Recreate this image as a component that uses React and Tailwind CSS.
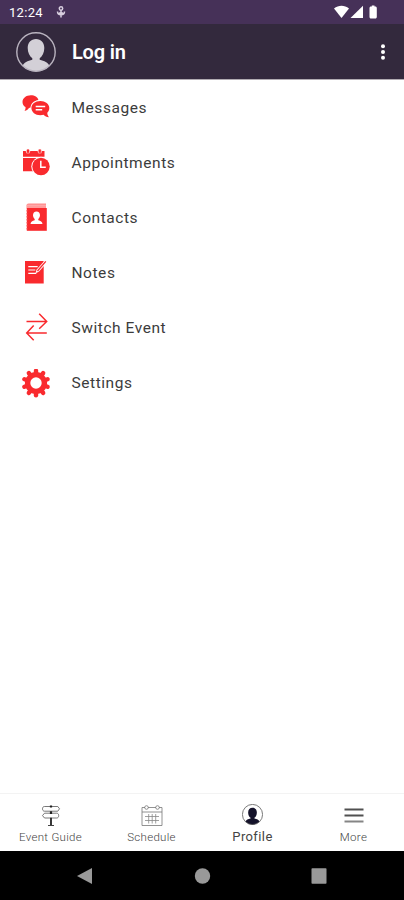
import React from 'react';

const gearAngles = [0, 36, 72, 108, 144, 180, 216, 252, 288, 324];

const MessagesIcon = () => (
  <svg width="29" height="29" viewBox="0 0 29 29" fill="#f92a2e">
    <path d="M8.800 2.300c4 0 7 2 7.600 4.700-4.400.6-7.600 3.600-7.900 7.600-.6.3-1 .4-1.500.4-1.100 1.600-2.500 2.500-4.500 3 .9-1.300 1.200-2.500 1-3.900C1.600 13 .5 11.200.5 9c0-3.800 3.700-6.700 8.300-6.700z" />
    <path d="M18.300 7.900c5 0 9 3 9 7.100 0 2-.8 3.600-2 4.800 0 1.600.5 3 1.600 4.400-2.300-.2-4-1-5.300-2.400-1 .3-2.100.4-3.300.4-5 0-8.900-3.100-8.900-7.200s3.900-7.100 8.900-7.100z" />
    <path d="M13.700 13.500h9.500M13.700 16.800h6.500" stroke="#fff" strokeWidth="1.400" />
  </svg>
);

const AppointmentsIcon = () => (
  <svg width="29" height="29" viewBox="0 0 29 29" fill="#f92a2e">
    <path d="M1 3h21.500v5.800H1zM1 10h21.500v13.200H1z" />
    <circle cx="6" cy="3.400" r="2.200" fill="#ffb3b3" />
    <circle cx="17.800" cy="3.400" r="2.200" fill="#ffb3b3" />
    <path d="M5 1.500h2v3.200H5zM16.800 1.500h2v3.200h-2z" />
    <circle cx="19" cy="18.500" r="9.700" fill="#fff" />
    <circle cx="19" cy="18.500" r="8.700" />
    <path d="M18.800 12.800v6.400h5" fill="none" stroke="#fff" strokeWidth="1.500" />
  </svg>
);

const ContactsIcon = () => (
  <svg width="29" height="29" viewBox="0 0 29 29" fill="#f92a2e">
    <path d="M6.500.5H24v5H4.500V2.500c0-1.200.8-2 2-2z" fill="#ff8b8b" />
    <path d="M5 2.300h19M5 4h19" stroke="#ffc9c9" strokeWidth=".6" />
    <path d="M4.800 5h20v22.800h-20z" />
    <path d="M4.600 7v20" stroke="#ff9b9b" strokeWidth="1.200" strokeDasharray="1.500 1.500" />
    <path d="M14.500 8.500c2.200 0 3.500 1.500 3.500 3.700 0 1.500-.7 2.900-1.700 3.700v1.300c2.300.5 3.900 1.500 4.200 3.800h-12c.3-2.300 1.900-3.300 4.200-3.800v-1.300c-1-.8-1.700-2.200-1.700-3.700 0-2.200 1.300-3.700 3.500-3.700z" fill="#fff" />
  </svg>
);

const NotesIcon = () => (
  <svg width="29" height="29" viewBox="0 0 29 29" fill="#f92a2e">
    <path d="M3 3h18.700v22.500H3z" />
    <path d="M6.300 8.700h9.400M6.300 12h7M6.300 15.300h8" stroke="#fff" strokeWidth="1.200" />
    <path d="M13.500 15.300l1-3.500 8-9 2.300 2-8 9z" fill="#fff" />
    <path d="M15.500 13l8.300-9.700" stroke="#f92a2e" strokeWidth="1.300" />
  </svg>
);

const SwitchIcon = () => (
  <svg width="29" height="29" viewBox="0 0 29 29" fill="none" stroke="#f92a2e" strokeWidth="1.500">
    <path d="M4.500 8.500h20M17.200.8l7.500 7.700-7.500 7.300M24.800 20h-20M11.700 12.600l-7 7.400 7 7.300" />
  </svg>
);

const SettingsIcon = () => (
  <svg width="29" height="29" viewBox="0 0 29 29">
    {gearAngles.map((a) => (
      <path
        key={a}
        d="M14 4.500V1.800"
        stroke="#f92a2e"
        strokeWidth="4.400"
        strokeLinecap="round"
        transform={`rotate(${a} 14 14)`}
      />
    ))}
    <circle cx="14" cy="14" r="8.400" fill="none" stroke="#f92a2e" strokeWidth="5.400" />
  </svg>
);

const GuideIcon = () => (
  <svg width="24" height="24" viewBox="0 0 24 24" fill="none" stroke="#555" strokeWidth=".8">
    <path d="M5.500 3.500h13.300l1.700 2.300-1.700 2.400H5.500c-1.300 0-2-1-2-2.400s.7-2.300 2-2.300z" />
    <path d="M5.500 10.200h12.200c1.300 0 2 1 2 2.400s-.7 2.400-2 2.400H5.500l-2-2.400z" />
    <path d="M12 2.500v2M12 8.200v2.800" stroke="#222" strokeWidth="2.200" />
    <path d="M12 14.700V22" stroke="#222" strokeWidth="1.800" />
    <path d="M9 22.500h6" stroke="#444" strokeWidth="1" />
  </svg>
);

const ScheduleIcon = () => (
  <svg width="24" height="24" viewBox="0 0 24 24" fill="none" stroke="#777" strokeWidth=".8">
    <path d="M5 4.500H2v18h20v-18h-3M8 4.500h8M2 9h20" />
    <circle cx="6.500" cy="4.500" r="1.800" />
    <circle cx="17.500" cy="4.500" r="1.800" />
    <path d="M5 13.500h14M5 17.500h14M8.700 11v9.500M12.200 11v9.500M15.700 11v9.500" stroke="#888" />
  </svg>
);

const Person = ({ size, ring, fill, ringWidth }) => (
  <svg width={size} height={size} viewBox="0 0 40 40">
    <path d="M20 7c5 0 8.300 3.600 8.300 9 0 4.300-1.900 8.300-4.600 10.200v1.500c4.600 1 8.500 2.600 9.800 6.300A19 19 0 0 1 20 39.300 19 19 0 0 1 6.500 34c1.300-3.700 5.200-5.300 9.800-6.300v-1.500c-2.700-1.900-4.600-5.900-4.600-10.200 0-5.400 3.300-9 8.300-9z" fill={fill} />
    <circle cx="20" cy="20" r="19.200" fill="none" stroke={ring} strokeWidth={ringWidth} />
  </svg>
);

const MoreIcon = () => (
  <svg width="24" height="24" viewBox="0 0 24 24" strokeWidth="2">
    <path d="M2.500 6.500h19M2.500 12.500h19" stroke="#505050" />
    <path d="M2.500 18.500h19" stroke="#858585" />
  </svg>
);

const menuItems = [
  { label: 'Messages', icon: MessagesIcon },
  { label: 'Appointments', icon: AppointmentsIcon },
  { label: 'Contacts', icon: ContactsIcon },
  { label: 'Notes', icon: NotesIcon },
  { label: 'Switch Event', icon: SwitchIcon },
  { label: 'Settings', icon: SettingsIcon },
];

function StatusBar() {
  return (
    <div className="flex h-6 items-center bg-[#463158] pl-[9px] pr-[25px] text-white">
      <span className="pt-[2px] text-[13px] tracking-[0.3px]">12:24</span>
      <svg className="ml-3" width="12" height="14" viewBox="0 0 12 14" fill="none" stroke="#d8cfdf" strokeWidth="1.500">
        <circle cx="6" cy="3.500" r="1.700" />
        <path d="M2.500 6.500c0 2 1.500 3.200 3.500 3.200s3.500-1.200 3.500-3.200M6 5v7.500M4.200 7.500L6 9.500l1.800-2" />
      </svg>
      <div className="ml-auto flex items-center">
        <svg width="45" height="16" viewBox="0 0 45 16" fill="#fff">
          <path d="M0 4.500c4.500-3.700 10.500-3.700 15 0L7.500 14z" />
          <path d="M29 1.800V14H16.500z" />
          <path d="M37 2.500h.8V1.500h2.700v1h.8c.9 0 1.500.6 1.500 1.500v9c0 .9-.6 1.500-1.500 1.500H37c-.9 0-1.500-.6-1.500-1.500V4c0-.9.6-1.500 1.500-1.500z" />
        </svg>
      </div>
    </div>
  );
}

function Header() {
  return (
    <header className="flex h-14 items-center border-b border-[#b0abb1] bg-[#33293d] pl-4 pr-[18px] pt-px">
      <Person size={40} ring="#b9b3bf" fill="#d3d0d7" ringWidth={1.4} />
      <h1 className="ml-4 text-[20px] font-semibold tracking-[-0.2px] text-white">Log in</h1>
      <svg className="ml-auto" width="6" height="20" viewBox="0 0 6 20" fill="#fff">
        <circle cx="3" cy="4.200" r="2" />
        <circle cx="3" cy="10" r="2" />
        <circle cx="3" cy="15.800" r="2" />
      </svg>
    </header>
  );
}

function TabItem({ label, icon, active }) {
  return (
    <button className="flex flex-1 flex-col items-center pt-[9px]">
      <span className={active ? 'flex h-6 items-center pb-[2px]' : 'flex h-6 items-center'}>{icon}</span>
      {active ? (
        <span className="mt-px text-[13px] leading-[18px] tracking-[0.4px] text-[#444]">{label}</span>
      ) : (
        <span className="mt-px text-[11.5px] font-light leading-[18px] tracking-[0.3px] text-[#444]">{label}</span>
      )}
    </button>
  );
}

export default function App() {
  return (
    <div className="flex h-[900px] w-[404px] flex-col overflow-hidden bg-white font-['Roboto',sans-serif]">
      <StatusBar />
      <Header />

      <main className="flex-1">
        {menuItems.map(({ label, icon: Icon }) => (
          <div key={label} className="flex h-[55.1px] items-center pl-[22px]">
            <Icon />
            <span className="ml-[20.5px] pt-[2px] text-[15.5px] tracking-[0.55px] text-[#3c3c3c]">{label}</span>
          </div>
        ))}
      </main>

      <nav className="flex h-[58px] border-t border-[#f3f3f3]">
        <TabItem label="Event Guide" icon={<GuideIcon />} />
        <TabItem label="Schedule" icon={<ScheduleIcon />} />
        <TabItem label="Profile" icon={<Person size={21} ring="#555" fill="#14122a" ringWidth={1.5} />} active />
        <TabItem label="More" icon={<MoreIcon />} />
      </nav>

      <div className="flex h-[49px] items-center bg-black pl-[77px] pt-px">
        <svg width="250" height="18" viewBox="0 0 250 18" fill="#999">
          <path d="M15 1v16L0 9z" />
          <circle cx="125.500" cy="9" r="7.700" />
          <rect x="234.500" y="1.300" width="15" height="15.400" rx=".8" />
        </svg>
      </div>
    </div>
  );
}
